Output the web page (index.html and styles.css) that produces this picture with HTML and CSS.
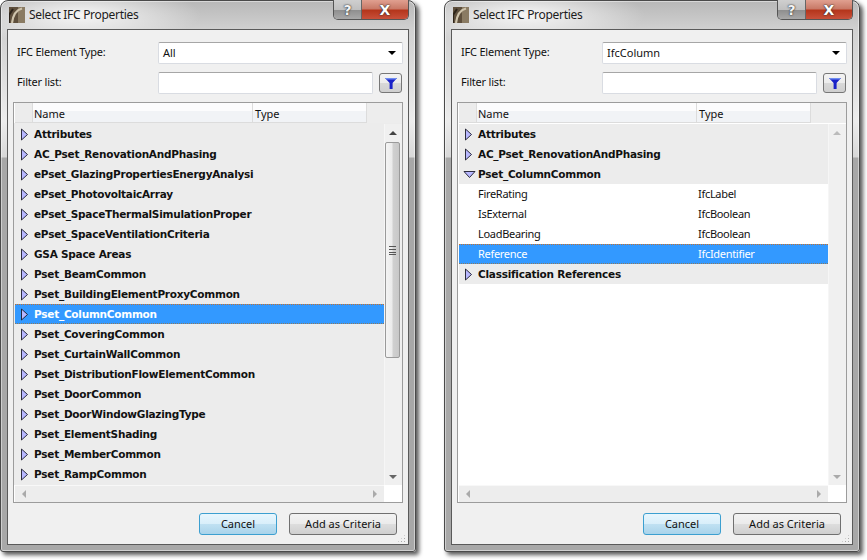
FILE: index.html
```html
<!DOCTYPE html>
<html lang="en">
<head>
    <meta charset="UTF-8">
    <title>Select IFC Properties</title>
    <link rel="stylesheet" href="styles.css">
</head>
<body>
    <svg class="defs" width="0" height="0">
        <defs>
            <symbol id="tri-right" viewBox="0 0 9 13"><path d="M1.5 1 L7.5 6.5 L1.5 12 Z" fill="#b8b8ff" stroke="#1a1a2a" stroke-width="0.9"/></symbol>
            <symbol id="tri-down" viewBox="0 0 13 9"><path d="M1 1.5 L12 1.5 L6.5 7.5 Z" fill="#b8b8ff" stroke="#1a1a2a" stroke-width="0.9"/></symbol>
            <symbol id="funnel" viewBox="0 0 14 14"><path d="M1 2 H13 L8.6 7 V13 H5.6 V7 Z" fill="#1a22c8"/><path d="M1 2 H13 L11.5 3.6 H2.5 Z" fill="#6f8cf0"/></symbol>
            <symbol id="logo" viewBox="0 0 16 16"><rect width="16" height="16" fill="#5e4f3c"/><rect x="9" width="7" height="16" fill="#8a7b63"/><path d="M3 16 C4 8 7 3 13 1.5" fill="none" stroke="#cfc4ac" stroke-width="2.2"/><path d="M0 16 L0 8 L4 2" fill="none" stroke="#2d241a" stroke-width="2"/></symbol>
        </defs>
    </svg>

    <div class="desktop">
        <!-- left dialog: all element types -->
        <div class="window">
            <div class="titlebar">
                <svg class="app-icon"><use href="#logo"/></svg>
                <span class="title">Select IFC Properties</span>
                <div class="caption-btns">
                    <span class="cap-btn cap-help">?</span>
                    <span class="cap-btn cap-close">X</span>
                </div>
            </div>
            <div class="client">
                <div class="field-row">
                    <label>IFC Element Type:</label>
                    <div class="combo"><span>All</span><i class="combo-arrow"></i></div>
                </div>
                <div class="field-row filter-row">
                    <label>Filter list:</label>
                    <div class="text-input"></div>
                    <button class="filter-btn"><svg><use href="#funnel"/></svg></button>
                </div>
                <div class="table">
                    <div class="table-head">
                        <div class="col-blank"></div>
                        <div class="col-name">Name</div>
                        <div class="col-type">Type</div>
                        <div class="col-rest"></div>
                    </div>
                    <div class="table-body">
                        <div class="rows">
                            <div class="row group"><svg class="twisty"><use href="#tri-right"/></svg>Attributes</div>
                            <div class="row group"><svg class="twisty"><use href="#tri-right"/></svg>AC_Pset_RenovationAndPhasing</div>
                            <div class="row group"><svg class="twisty"><use href="#tri-right"/></svg>ePset_GlazingPropertiesEnergyAnalysi</div>
                            <div class="row group"><svg class="twisty"><use href="#tri-right"/></svg>ePset_PhotovoltaicArray</div>
                            <div class="row group"><svg class="twisty"><use href="#tri-right"/></svg>ePset_SpaceThermalSimulationProper</div>
                            <div class="row group"><svg class="twisty"><use href="#tri-right"/></svg>ePset_SpaceVentilationCriteria</div>
                            <div class="row group"><svg class="twisty"><use href="#tri-right"/></svg>GSA Space Areas</div>
                            <div class="row group"><svg class="twisty"><use href="#tri-right"/></svg>Pset_BeamCommon</div>
                            <div class="row group"><svg class="twisty"><use href="#tri-right"/></svg>Pset_BuildingElementProxyCommon</div>
                            <div class="row group selected"><svg class="twisty"><use href="#tri-right"/></svg>Pset_ColumnCommon</div>
                            <div class="row group"><svg class="twisty"><use href="#tri-right"/></svg>Pset_CoveringCommon</div>
                            <div class="row group"><svg class="twisty"><use href="#tri-right"/></svg>Pset_CurtainWallCommon</div>
                            <div class="row group"><svg class="twisty"><use href="#tri-right"/></svg>Pset_DistributionFlowElementCommon</div>
                            <div class="row group"><svg class="twisty"><use href="#tri-right"/></svg>Pset_DoorCommon</div>
                            <div class="row group"><svg class="twisty"><use href="#tri-right"/></svg>Pset_DoorWindowGlazingType</div>
                            <div class="row group"><svg class="twisty"><use href="#tri-right"/></svg>Pset_ElementShading</div>
                            <div class="row group"><svg class="twisty"><use href="#tri-right"/></svg>Pset_MemberCommon</div>
                            <div class="row group"><svg class="twisty"><use href="#tri-right"/></svg>Pset_RampCommon</div>
                        </div>
                        <div class="vscroll">
                            <i class="arrow-up"></i>
                            <div class="thumb"><span class="grip"></span></div>
                            <i class="arrow-down"></i>
                        </div>
                    </div>
                    <div class="hscroll"><i class="arrow-left"></i><i class="arrow-right"></i></div>
                </div>
                <div class="actions">
                    <button class="btn btn-default">Cancel</button>
                    <button class="btn btn-add">Add as Criteria</button>
                </div>
                <div class="grip-corner"></div>
            </div>
        </div>

        <!-- right dialog: IfcColumn, expanded -->
        <div class="window">
            <div class="titlebar">
                <svg class="app-icon"><use href="#logo"/></svg>
                <span class="title">Select IFC Properties</span>
                <div class="caption-btns">
                    <span class="cap-btn cap-help">?</span>
                    <span class="cap-btn cap-close">X</span>
                </div>
            </div>
            <div class="client">
                <div class="field-row">
                    <label>IFC Element Type:</label>
                    <div class="combo"><span>IfcColumn</span><i class="combo-arrow"></i></div>
                </div>
                <div class="field-row filter-row">
                    <label>Filter list:</label>
                    <div class="text-input"></div>
                    <button class="filter-btn"><svg><use href="#funnel"/></svg></button>
                </div>
                <div class="table">
                    <div class="table-head">
                        <div class="col-blank"></div>
                        <div class="col-name">Name</div>
                        <div class="col-type">Type</div>
                        <div class="col-rest"></div>
                    </div>
                    <div class="table-body white">
                        <div class="rows">
                            <div class="row group"><svg class="twisty"><use href="#tri-right"/></svg>Attributes</div>
                            <div class="row group"><svg class="twisty"><use href="#tri-right"/></svg>AC_Pset_RenovationAndPhasing</div>
                            <div class="row group"><svg class="twisty open"><use href="#tri-down"/></svg>Pset_ColumnCommon</div>
                            <div class="row prop"><span class="prop-name">FireRating</span><span>IfcLabel</span></div>
                            <div class="row prop"><span class="prop-name">IsExternal</span><span>IfcBoolean</span></div>
                            <div class="row prop"><span class="prop-name">LoadBearing</span><span>IfcBoolean</span></div>
                            <div class="row prop selected"><span class="prop-name">Reference</span><span>IfcIdentifier</span></div>
                            <div class="row group"><svg class="twisty"><use href="#tri-right"/></svg>Classification References</div>
                        </div>
                        <div class="vscroll disabled">
                            <i class="arrow-up"></i>
                            <i class="arrow-down"></i>
                        </div>
                    </div>
                    <div class="hscroll"><i class="arrow-left"></i><i class="arrow-right"></i></div>
                </div>
                <div class="actions">
                    <button class="btn btn-default">Cancel</button>
                    <button class="btn btn-add">Add as Criteria</button>
                </div>
                <div class="grip-corner"></div>
            </div>
        </div>
    </div>
</body>
</html>
```

FILE: styles.css
```css
:root {
    --ui-font: "Noto Sans", "DejaVu Sans", sans-serif;
    --row-bold: "DejaVu Sans", sans-serif;
    --list-grey: #ececec;
    --select-blue: #3399ff;
}

html, body {
    margin: 0;
    height: 560px;
    overflow: hidden;
    background: #fff;
}

body {
    font-family: var(--ui-font);
    font-size: 11px;
    color: #111;
}

.defs {
    display: block;
    height: 0;
}

.desktop {
    display: flex;
    gap: 28px;
}

/* window frame */
.window {
    box-sizing: border-box;
    width: 416px;
    height: 552px;
    padding: 0 6px 6px 6px;
    display: flex;
    flex-direction: column;
    border: 1px solid #4a4a4a;
    border-radius: 8px 8px 3px 3px;
    background:
        radial-gradient(ellipse 120px 30px at 80px 14px, rgba(255,255,255,0.85), rgba(255,255,255,0) 100%),
        linear-gradient(to bottom, #b8b8b8 0, #d0d0d0 28px, #ececec 120px, #d8d8d8 156px, #a8a8a8 157px, #a8a8a8 100%);
    box-shadow: 3px 3px 4px rgba(0, 0, 0, 0.65), inset 0 0 0 1px rgba(255, 255, 255, 0.45);
}

.titlebar {
    height: 28px;
    flex: none;
    display: flex;
    align-items: flex-start;
    position: relative;
}

.app-icon {
    width: 16px;
    height: 16px;
    margin: 6px 0 0 2px;
    flex: none;
}

.title {
    margin: 6px 0 0 4px;
    font-size: 12px;
    line-height: 16px;
    letter-spacing: -0.3px;
    color: #1c1c1c;
}

.caption-btns {
    position: absolute;
    top: -1px;
    right: 0;
    height: 19px;
    display: flex;
    border: 1px solid #555;
    border-top: 0;
    border-radius: 0 0 5px 5px;
    overflow: hidden;
}

.cap-btn {
    display: flex;
    align-items: center;
    justify-content: center;
    height: 19px;
    font-family: var(--row-bold);
    font-weight: bold;
    color: #fff;
    text-shadow: 0 0 2px #333, 0 0 1px #222;
}

.cap-help {
    width: 27px;
    font-size: 14px;
    color: #f4f4f4;
    background: linear-gradient(to bottom, #cfcfcf 0, #c0c0c0 50%, #8f8f8f 55%, #a8a8a8 100%);
    border-right: 1px solid #666;
}

.cap-close {
    width: 46px;
    font-size: 14px;
    background: linear-gradient(to bottom, #e0a090 0, #c97a68 45%, #b5361c 55%, #c8503a 100%);
}

/* dialog body */
.client {
    position: relative;
    box-sizing: border-box;
    height: 516px;
    padding: 12px 5px 0 5px;
    display: flex;
    flex-direction: column;
    background: #f0f0f0;
    border: 1px solid #5a5a5a;
}

.field-row {
    display: flex;
    align-items: center;
    height: 22px;
    margin-bottom: 8px;
}

.field-row label {
    box-sizing: border-box;
    width: 145px;
    padding: 0 0 3px 4px;
    flex: none;
    letter-spacing: -0.2px;
}

.combo, .text-input {
    box-sizing: border-box;
    height: 22px;
    background: #fff;
    border: 1px solid #d9dce2;
    border-top-color: #a6a6a6;
    border-radius: 2px;
}

.combo {
    flex: 1;
    display: flex;
    align-items: center;
    justify-content: space-between;
    padding: 0 4px 1px 4px;
}

.combo-arrow {
    width: 0;
    height: 0;
    border: 4px solid transparent;
    border-top: 4px solid #000;
    border-bottom: 0;
    margin-right: 2px;
}

.text-input {
    width: 215px;
}

.filter-btn {
    box-sizing: border-box;
    width: 23px;
    height: 20px;
    margin: 0 0 0 6px;
    padding: 0;
    display: flex;
    align-items: center;
    justify-content: center;
    border: 1px solid #777;
    border-radius: 3px;
    background: linear-gradient(to bottom, #f3f3f3 0, #ececec 50%, #d8d8d8 52%, #cfcfcf 100%);
}

.filter-btn svg {
    width: 14px;
    height: 14px;
}

.filter-row {
    margin-bottom: 8px;
}

/* property table */
.table {
    box-sizing: border-box;
    height: 401px;
    display: flex;
    flex-direction: column;
    border: 1px solid #9c9c9c;
    background: #fff;
}

.table-head {
    height: 20px;
    flex: none;
    display: flex;
    background: #ededed;
    margin-left: 1px;
}

.col-blank, .col-name, .col-type {
    box-sizing: border-box;
    line-height: 21px;
    background: linear-gradient(to bottom, #fcfcfd 0, #fcfcfd 40%, #f1f3f6 41%, #f1f3f6 100%);
    border-bottom: 1px solid #dcdcdc;
    border-right: 1px solid #dcdcdc;
    padding-left: 2px;
}

.col-blank {
    width: 18px;
    background: #ececec;
}

.col-name {
    width: 220px;
    padding-left: 1px;
}

.col-type {
    width: 114px;
}

.col-rest {
    flex: 1;
}

.table-body {
    height: 362px;
    flex: none;
    display: flex;
    background: var(--list-grey);
    padding-top: 1px;
    box-sizing: border-box;
}

.table-body.white {
    background: #fff;
}

.rows {
    flex: 1;
    margin-left: 1px;
    min-width: 0;
    overflow: hidden;
}

.row {
    box-sizing: border-box;
    height: 20px;
    display: flex;
    align-items: center;
    white-space: nowrap;
    line-height: 20px;
    overflow: hidden;
}

.group {
    font-family: var(--row-bold);
    font-weight: bold;
    font-size: 10.5px;
    letter-spacing: -0.25px;
    background: var(--list-grey);
    color: #111;
    padding-left: 5px;
}

.twisty {
    width: 9px;
    height: 13px;
    margin-right: 5px;
    flex: none;
}

.twisty.open {
    width: 13px;
    height: 9px;
    margin: 0 2px 0 -1px;
}

.prop {
    padding-left: 19px;
    background: #fff;
    letter-spacing: -0.3px;
}

.prop-name {
    width: 220px;
    flex: none;
}

.row.selected {
    background: var(--select-blue);
    color: #fff;
    border-top: 1px dotted #c8702a;
    border-bottom: 1px dotted #8a7a60;
}

/* scroll bars */
.vscroll {
    width: 18px;
    flex: none;
    box-sizing: border-box;
    padding-right: 2px;
    position: relative;
    display: flex;
    flex-direction: column;
    align-items: center;
    background: #f0f0f0;
    border-left: 1px solid #f6f6f6;
}

.thumb {
    box-sizing: border-box;
    width: 15px;
    height: 216px;
    margin-top: 7px;
    display: flex;
    align-items: center;
    justify-content: center;
    border: 1px solid #9a9a9a;
    border-radius: 2px;
    background: linear-gradient(to right, #f4f4f4 0, #ececec 45%, #d0d0d0 55%, #c8c8c8 100%);
}

.grip {
    width: 7px;
    height: 7px;
    border-top: 1px solid #555;
    border-bottom: 1px solid #555;
    background: linear-gradient(to bottom, transparent 0, transparent 2px, #555 2px, #555 3px, transparent 3px, transparent 5px, #555 5px, #555 6px, transparent 6px);
}

.arrow-up, .arrow-down {
    width: 0;
    height: 0;
    border: 4px solid transparent;
}

.arrow-up {
    border-top: 0;
    border-bottom: 4px solid #444;
    margin-top: 7px;
}

.arrow-down {
    border-bottom: 0;
    border-top: 4px solid #666;
    margin-top: auto;
    margin-bottom: 6px;
}

.vscroll.disabled .arrow-up {
    border-bottom-color: #bbb;
}

.vscroll.disabled .arrow-down {
    border-top-color: #aaa;
}

.hscroll {
    flex: 1;
    margin: 0 18px 0 1px;
    display: flex;
    align-items: center;
    justify-content: space-between;
    padding: 0 7px 0 7px;
    background: #ededed;
    border-top: 1px solid #f8f8f8;
}

.arrow-left, .arrow-right {
    width: 0;
    height: 0;
    border: 4px solid transparent;
}

.arrow-left {
    border-left: 0;
    border-right: 4px solid #aaa;
}

.arrow-right {
    border-right: 0;
    border-left: 4px solid #aaa;
}

/* bottom buttons */
.actions {
    display: flex;
    justify-content: flex-end;
    gap: 12px;
    margin-top: 10px;
    padding-right: 6px;
}

.btn {
    box-sizing: border-box;
    height: 22px;
    padding: 0 0 2px 0;
    font-family: var(--ui-font);
    font-size: 11px;
    color: #111;
    border: 1px solid #707070;
    border-radius: 3px;
    background: linear-gradient(to bottom, #f2f2f2 0, #ebebeb 50%, #dddddd 52%, #cfcfcf 100%);
}

.btn-default {
    width: 78px;
    border-color: #3c9fd0;
    background: linear-gradient(to bottom, #e8f6fd 0, #d8eefa 50%, #bfe0f2 52%, #a9d3ea 100%);
}

.btn-add {
    width: 108px;
}

.grip-corner {
    position: absolute;
    right: 2px;
    bottom: 1px;
    width: 9px;
    height: 9px;
    background-image: radial-gradient(circle, #aaa 0.8px, transparent 1px);
    background-size: 3px 3px;
    clip-path: polygon(100% 0, 100% 100%, 0 100%);
}
```
